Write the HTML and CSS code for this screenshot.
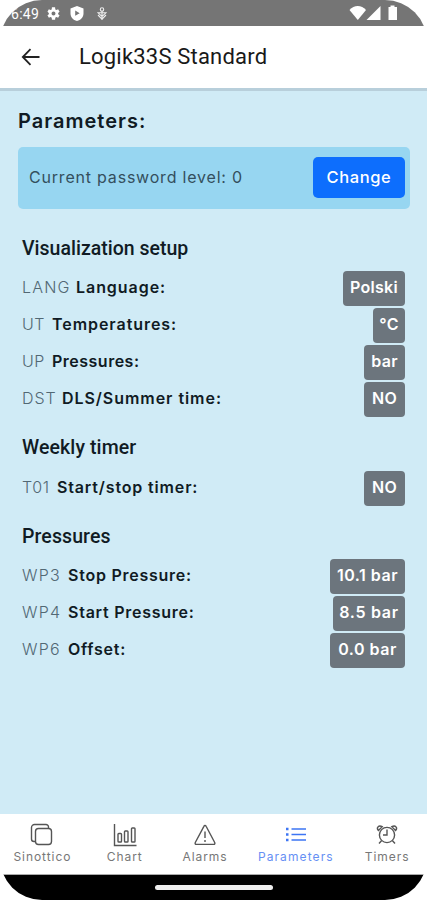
FILE: index.html
```
<!DOCTYPE html>
<html lang="en">
<head>
<meta charset="utf-8">
<title>Logik33S Standard</title>
<link rel="stylesheet" href="styles.css">
</head>
<body>
<div class="phone">
  <div class="status">
    <span class="clock">6:49</span>
    <svg class="gear" width="15" height="15" viewBox="0 0 24 24"><path fill="#fff" fill-rule="evenodd" d="M19.400 13a7.500 7.500 0 0 0 0-2l2.300-1.700-2.300-4-2.700 1.100a8 8 0 0 0-1.800-1L14.500 2h-5l-.4 3.400a8 8 0 0 0-1.800 1L4.600 5.300l-2.300 4L4.600 11a7.500 7.500 0 0 0 0 2l-2.300 1.700 2.300 4 2.700-1.100a8 8 0 0 0 1.800 1l.4 3.400h5l.4-3.400a8 8 0 0 0 1.800-1l2.700 1.100 2.300-4zM12 15.200a3.200 3.200 0 1 1 0-6.400 3.200 3.200 0 0 1 0 6.400z"/></svg>
    <svg class="shield" width="14" height="15" viewBox="0 0 14 15"><path fill="#fff" fill-rule="evenodd" d="M7 0l6.500 2.400v5c0 3.700-2.700 6.400-6.500 7.600C3.200 13.800.5 11.100.5 7.400v-5zM5.200 4.600v5.200l4.500-2.600z"/></svg>
    <svg class="cast" width="10" height="14" viewBox="0 0 10 14" fill="none" stroke="#eee" stroke-width="1.100"><circle cx="5" cy="2.500" r="1.700"/><path d="M5 4v9M1 8l4 4.200L9 8M1 5.800h8L5 9.500z"/></svg>
    <svg class="signal" width="50" height="16" viewBox="0 0 50 16" fill="#fff"><path d="M.5 5C5-.2 12.500-.2 17 5L8.800 15z"/><path d="M31.500 1v14h-14z"/><path d="M39.500 2h2V.500h4V2h2.500v13h-8.500z"/></svg>
  </div>
  <header class="header">
    <svg class="back" width="20" height="18" viewBox="0 0 20 18" fill="none" stroke="#222" stroke-width="1.800"><path d="M18.500 9H2M9.500 1.200L1.800 9l7.700 7.800"/></svg>
    <h1>Logik33S Standard</h1>
  </header>
  <main class="content">
    <h2>Parameters:</h2>
    <div class="password"><span class="level">Current password level: 0</span><button>Change</button></div>
    <section>
      <h3>Visualization setup</h3>
      <div class="row"><span class="code lang">LANG</span><b class="language">Language:</b><span class="badge polski">Polski</span></div>
      <div class="row"><span class="code ut">UT</span><b class="temps">Temperatures:</b><span class="badge deg">°C</span></div>
      <div class="row"><span class="code ut">UP</span><b class="press">Pressures:</b><span class="badge bar">bar</span></div>
      <div class="row"><span class="code dst">DST</span><b class="dls">DLS/Summer time:</b><span class="badge no">NO</span></div>
    </section>
    <section>
      <h3>Weekly timer</h3>
      <div class="row"><span class="code t01">T01</span><b class="timer">Start/stop timer:</b><span class="badge no">NO</span></div>
    </section>
    <section>
      <h3>Pressures</h3>
      <div class="row"><span class="code wp">WP3</span><b>Stop Pressure:</b><span class="badge ten">10.1 bar</span></div>
      <div class="row"><span class="code wp">WP4</span><b>Start Pressure:</b><span class="badge eight">8.5 bar</span></div>
      <div class="row"><span class="code wp">WP6</span><b>Offset:</b><span class="badge zero">0.0 bar</span></div>
    </section>
  </main>
  <nav class="tabs">
    <div class="tab t1"><svg width="24" height="24" viewBox="0 0 24 24"><rect x="5.500" y="5.500" width="16" height="16" rx="3"/><path d="M18.500 5.500V4a2.500 2.500 0 0 0-2.500-2.500H4.500a3 3 0 0 0-3 3V16a2.500 2.500 0 0 0 2.500 2.500h1.500"/></svg><span>Sinottico</span></div>
    <div class="tab t2"><svg width="24" height="24" viewBox="0 0 24 24"><path d="M1.500 1v21.500H23.500"/><rect x="5" y="10.500" width="3.500" height="8.500" rx=".8"/><rect x="11.500" y="8" width="3.500" height="11" rx=".8"/><rect x="18.500" y="5" width="3.500" height="14" rx=".8"/></svg><span>Chart</span></div>
    <div class="tab t3"><svg width="24" height="24" viewBox="0 0 24 24"><path d="M10.900 3.300L2.300 19.500c-.5 1 0 1.900 1 1.900h17.400c1 0 1.500-.9 1-1.900L13.100 3.300c-.5-1-1.700-1-2.200 0zM12 8.500v6.500M12 17v2"/></svg><span>Alarms</span></div>
    <div class="tab t4 active"><svg width="24" height="24" viewBox="0 0 24 24"><path d="M7.500 6H22M7.500 11.500H22M7.500 17H22"/><path stroke-width="2.400" d="M2 6h2.500M2 11.500h2.500M2 17h2.500"/></svg><span>Parameters</span></div>
    <div class="tab t5"><svg width="24" height="24" viewBox="0 0 24 24"><circle cx="12" cy="12" r="7.600"/><path d="M12 6.500V12H8M6.500 17.700L4 20.500M17.500 17.700l2.500 2.800M3.500 7.500C1 5 3.500 1.500 7.200 3.700zM20.500 7.500C23 5 20.500 1.500 16.800 3.700z"/></svg><span>Timers</span></div>
  </nav>
  <div class="gesture"><i></i></div>
</div>
</body>
</html>
```
FILE: styles.css
```
* { box-sizing: border-box; }
body { margin: 0; background: #fff; font-family: Inter, sans-serif; color: #101b24; }
.phone { width: 427px; height: 900px; display: flex; flex-direction: column; border-radius: 42px; overflow: hidden; background: #fff; }
.status { height: 26px; background: #757575; display: flex; align-items: center; padding-left: 11px; color: #fff; }
.clock { font: 14px Roboto, sans-serif; letter-spacing: .3px; width: 35px; margin-top: 2px; }
.gear { margin-top: 1px; }
.shield { margin-left: 9px; margin-top: 1px; }
.cast { margin-left: 13px; margin-top: 1px; }
.signal { margin-left: auto; margin-right: 28px; }
.header { height: 65px; border-bottom: 3px solid #b8cfdb; display: flex; align-items: center; padding-left: 21px; }
.header h1 { margin: 0 0 0 38px; font: 400 22px/30px Roboto, sans-serif; letter-spacing: .2px; color: #191919; }
.content { height: 723px; background: #d0ebf6; padding: 17px 17px 0 18px; }
h2 { margin: 0; font-size: 20px; line-height: 26px; font-weight: 600; letter-spacing: 1px; }
.password { margin-top: 13px; height: 62px; border-radius: 5px; background: #97d6f1; display: flex; align-items: center; justify-content: space-between; padding: 0 6px 1px 11px; color: #344f5d; font-size: 16px; }
.level { letter-spacing: .8px; padding-bottom: 2px; }
button { width: 92px; height: 41px; margin-right: -1px; padding: 0 0 2px; border: 0; border-radius: 5px; background: #0d6efd; color: #fff; font: 500 16.500px Inter, sans-serif; letter-spacing: .6px; }
section { padding: 0 5px 0 4px; }
h3 { margin: 0; height: 61px; padding-top: 28px; font: 500 19.500px/24px Roboto, sans-serif; letter-spacing: 0; }
section + section h3 { height: 51.500px; padding-top: 18px; letter-spacing: .1px; }
.row { height: 37px; display: flex; align-items: center; font-size: 16px; }
.row b { font-weight: 600; letter-spacing: .75px; padding-bottom: 3px; }
.row .language, .row .temps, .row .dls { letter-spacing: .95px; }
.row .press { letter-spacing: .5px; }
.row .timer { letter-spacing: .85px; }
.code { color: #526874; font-weight: 300; letter-spacing: .6px; padding-bottom: 3px; }
.lang { width: 54px; letter-spacing: 1.200px; }
.ut { width: 30px; }
.dst { width: 40px; letter-spacing: 1px; }
.t01 { width: 35px; }
.wp { width: 46px; letter-spacing: 1.200px; }
.badge { margin-left: auto; height: 35px; border-radius: 4px; background: #6c757d; color: #fff; font-weight: 600; display: flex; justify-content: center; padding-top: 6px; line-height: 20px; letter-spacing: .3px; }
.polski { width: 62px; }
.deg { width: 32px; }
.bar, .no { width: 41px; }
.ten, .zero { width: 75px; letter-spacing: .5px; }
.eight { width: 72px; letter-spacing: .7px; }
.tabs { height: 61px; border-bottom: 1px solid #aaa; display: flex; background: #fff; }
.tab { display: flex; flex-direction: column; align-items: center; padding-top: 9px; color: #777; font-size: 12px; letter-spacing: .95px; }
.tab svg { fill: none; stroke: #555; stroke-width: 1.400; }
.tab span { line-height: 18px; margin-top: 1px; white-space: nowrap; }
.active { color: #6690f4; letter-spacing: 1.100px; }
.active svg { stroke: #3d75f4; }
.t1 { width: 85px; }
.t2 { width: 80px; }
.t3 { width: 81px; }
.t4 { width: 101px; }
.t5 { width: 81px; padding-left: 1px; }
.gesture { height: 25px; background: #000; display: flex; justify-content: center; padding-top: 10px; }
.gesture i { width: 118px; height: 5px; border-radius: 3px; background: #eee; }
```
